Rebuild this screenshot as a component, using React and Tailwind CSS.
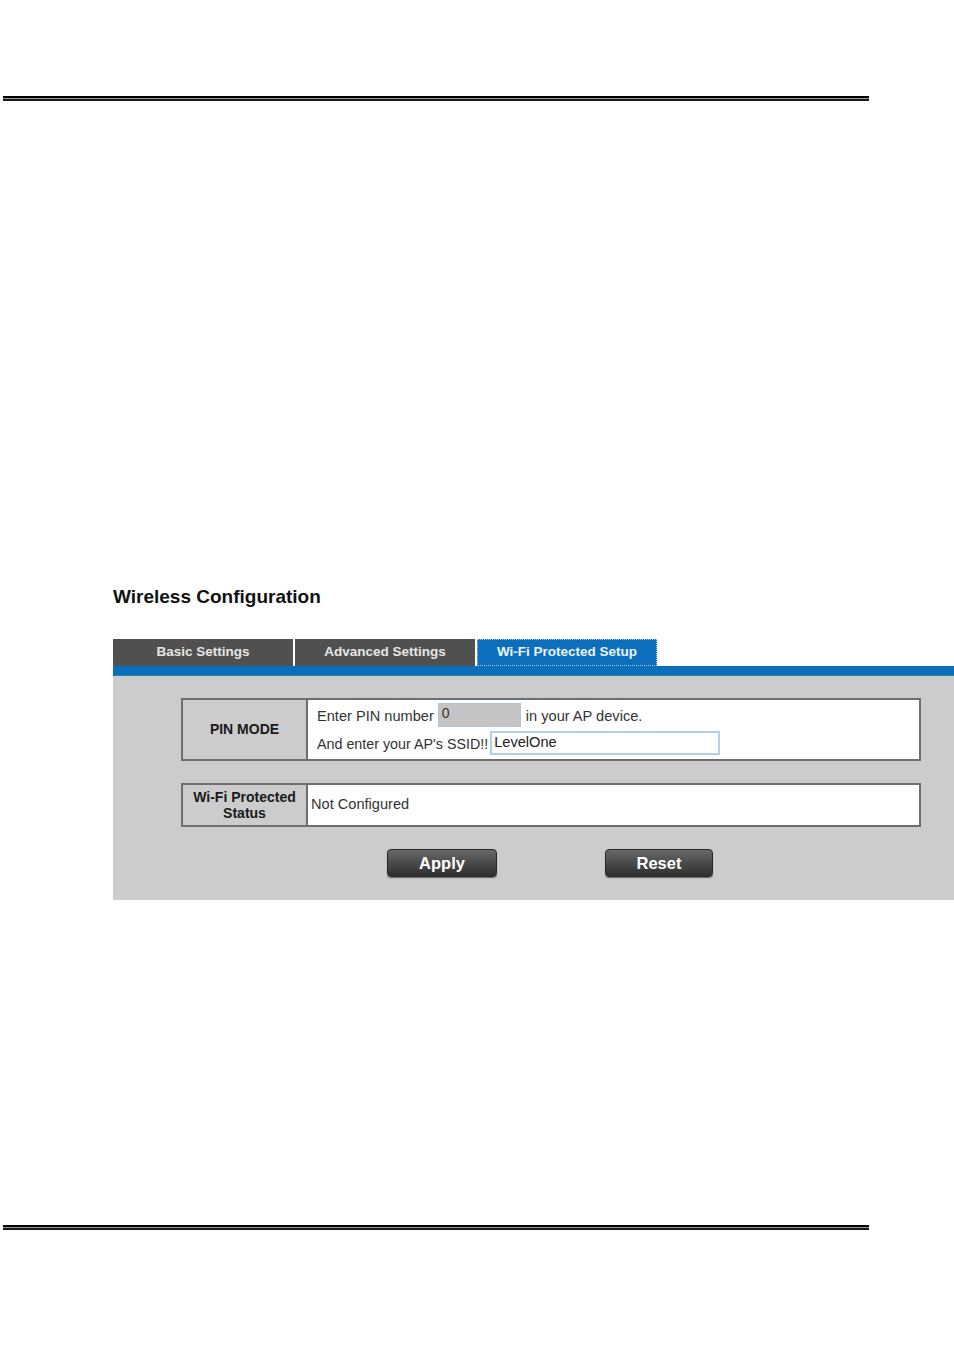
import React from 'react';

function DoubleRule() {
  return (
    <div className="ml-[3px] w-[866px]">
      <div className="h-[2px] bg-black"></div>
      <div className="h-[1px] bg-[#9a9a9a]"></div>
      <div className="h-[2px] bg-[#1a1a1a]"></div>
    </div>
  );
}

function Tab({ label, active }) {
  return (
    <div
      className={
        'w-[180px] h-[27px] flex items-center justify-center text-[13.5px] font-bold ' +
        (active
          ? 'bg-[#0b6fbd] text-[#eef3f8] border border-dotted border-[#a9c4dc]'
          : 'bg-[#505050] text-[#e6e6e6]')
      }
    >
      {label}
    </div>
  );
}

function GreyButton({ children, className }) {
  return (
    <button
      className={
        'h-[28px] rounded-[4px] bg-gradient-to-b from-[#6a6a6a] via-[#4a4a4a] to-[#2f2f2f] text-white text-[16.5px] font-bold shadow-[0_1px_1px_rgba(0,0,0,0.5)] border border-[#2a2a2a] ' +
        className
      }
    >
      {children}
    </button>
  );
}

export default function App() {
  return (
    <div className="w-[954px] h-[1350px] bg-white font-['Liberation_Sans',Arial,sans-serif] text-[#222]">
      <div className="h-[96px]"></div>
      <DoubleRule />

      <div className="mt-[484px] ml-[113px]">
        <h1 className="text-[19px] font-bold leading-[24px] text-[#111]">Wireless Configuration</h1>

        <div className="mt-[30px] flex gap-[2px]">
          <Tab label="Basic Settings" />
          <Tab label="Advanced Settings" />
          <Tab label="Wi-Fi Protected Setup" active />
        </div>
        <div className="h-[10px] bg-[#0a6ebb] border-b border-[#1b8a96]"></div>

        <div className="h-[224px] bg-[#cccccc] pt-[22px] pl-[68px]">
          <div className="w-[740px] h-[63px] flex border-2 border-[#6e6e6e]">
            <div className="w-[125px] bg-[#cccccc] border-r-2 border-[#6e6e6e] flex items-center justify-center text-[14px] font-bold text-[#1a1a1a]">
              PIN MODE
            </div>
            <div className="flex-1 bg-white pl-[9px] pt-[3px] text-[14.6px] text-[#333]">
              <div className="flex items-center h-[24px]">
                <span className="mt-[4px]">Enter PIN number</span>
                <div className="ml-[4px] w-[83px] h-[24px] bg-[#c4c4c4] border border-[#aec6dc] px-[3px] text-[14px] leading-[18px]">0</div>
                <span className="ml-[5px] mt-[4px]">in your AP device.</span>
              </div>
              <div className="flex items-center h-[24px] mt-[4px]">
                <span className="mt-[4px] text-[14.3px]">And enter your AP's SSID!!</span>
                <div className="ml-[2px] w-[230px] h-[24px] bg-white border-2 border-[#b4cfe8] px-[2px] text-[14.6px] leading-[18px] text-[#222]">LevelOne</div>
              </div>
            </div>
          </div>

          <div className="mt-[22px] w-[740px] h-[44px] flex border-2 border-[#6e6e6e]">
            <div className="w-[125px] bg-[#cccccc] border-r-2 border-[#6e6e6e] flex items-center justify-center text-center text-[14px] font-bold leading-[16px] text-[#1a1a1a]">
              Wi-Fi Protected
              <br />
              Status
            </div>
            <div className="flex-1 bg-white flex items-center pl-[3px] text-[14.6px] text-[#333]">Not Configured</div>
          </div>

          <div className="mt-[22px] flex">
            <GreyButton className="ml-[206px] w-[110px]">Apply</GreyButton>
            <GreyButton className="ml-[108px] w-[108px]">Reset</GreyButton>
          </div>
        </div>
      </div>

      <div className="mt-[325px]">
        <DoubleRule />
      </div>
    </div>
  );
}
